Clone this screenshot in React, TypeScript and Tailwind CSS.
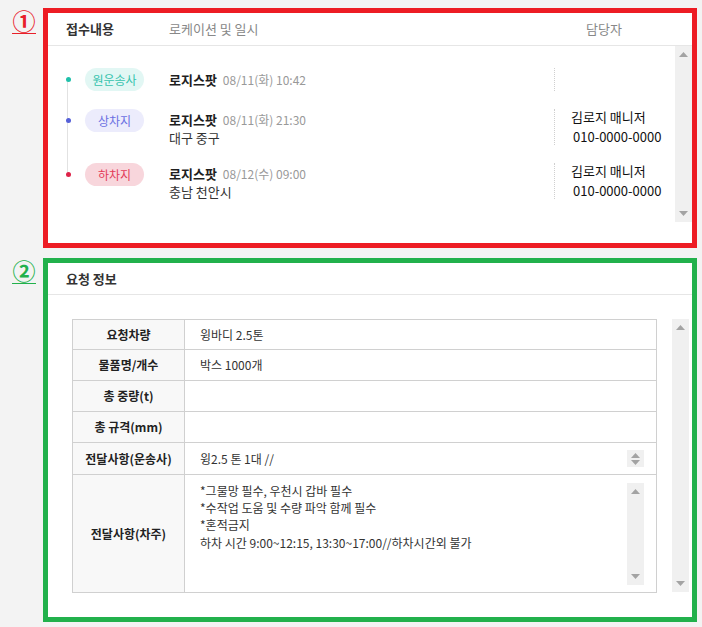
import React from 'react'

const FONT = 'font-["Noto_Sans_CJK_KR","Noto_Sans",sans-serif]'

type Stop = {
  badge: string
  badgeClass: string
  dotClass: string
  date: string
  addr?: string
  manager?: boolean
}

const STOPS: Stop[] = [
  { badge: '원운송사', badgeClass: 'bg-[#e2f7f4] text-[#35c3ad]', dotClass: 'bg-[#1fc0aa]', date: '08/11(화) 10:42' },
  { badge: '상차지', badgeClass: 'bg-[#ececfc] text-[#6b70e2]', dotClass: 'bg-[#5560d8]', date: '08/11(화) 21:30', addr: '대구 중구', manager: true },
  { badge: '하차지', badgeClass: 'bg-[#f8d6dc] text-[#e33a58]', dotClass: 'bg-[#de2248]', date: '08/12(수) 09:00', addr: '충남 천안시', manager: true },
]

function Arrow({ up }: { up?: boolean }) {
  return (
    <svg width="9" height="5" viewBox="0 0 9 5" aria-hidden>
      <polygon points={up ? '4.5,0 9,5 0,5' : '0,0 9,0 4.5,5'} fill="#a3a3a3" />
    </svg>
  )
}

function ScrollBar({ className }: { className: string }) {
  return (
    <div className={`flex flex-col items-center justify-between bg-[#f0f0f0] py-[6px] ${className}`}>
      <Arrow up />
      <Arrow />
    </div>
  )
}

function Marker({ n, color }: { n: string; color: string }) {
  return (
    <div className="w-[43px] shrink-0 pl-[12px]">
      <span className={`block w-[24px] text-center text-[23px] leading-[25px] font-bold border-b-[1.5px] ${color}`}>{n}</span>
    </div>
  )
}

function StopRow({ s }: { s: Stop }) {
  const tall = !!s.addr
  return (
    <div className={`flex items-start ${tall ? 'h-[36px]' : 'h-[23px]'}`}>
      <div className="w-[37px] h-[23px] shrink-0 flex items-center pl-[18px]">
        <span className={`relative z-10 size-[5px] rounded-full ${s.dotClass}`} />
      </div>
      <span className={`w-[59px] h-[23px] shrink-0 rounded-full flex items-center justify-center text-[12px] ${s.badgeClass}`}>{s.badge}</span>
      <div className="ml-[25px] flex-1">
        <div className={`flex items-center gap-[6px] ${tall ? 'h-[22px]' : 'h-[23px]'}`}>
          <span className="text-[13px] font-bold text-[#1f1f1f]">로지스팟</span>
          <span className="text-[12px] text-[#999]">{s.date}</span>
        </div>
        {s.addr && <div className="text-[13px] leading-[13px] text-[#333]">{s.addr}</div>}
      </div>
      <div className={`w-[121px] shrink-0 border-l border-dotted border-[#cfcfcf] flex items-center ${tall ? 'h-[36px]' : 'h-[23px]'}`}>
        {s.manager && (
          <div className="pl-[16px] text-[13px] leading-[20px] text-[#111]">
            <div>김로지 매니저</div>
            <div className="pl-[2px]">010-0000-0000</div>
          </div>
        )}
      </div>
    </div>
  )
}

const ROWS: { label: string; value?: string; h: string; kind?: 'line' | 'area' }[] = [
  { label: '요청차량', value: '윙바디 2.5톤', h: 'h-[30px]' },
  { label: '물품명/개수', value: '박스 1000개', h: 'h-[31px]' },
  { label: '총 중량(t)', h: 'h-[31px]' },
  { label: '총 규격(mm)', h: 'h-[31px]' },
  { label: '전달사항(운송사)', value: '윙2.5 톤 1대 //', h: 'h-[32px]', kind: 'line' },
  { label: '전달사항(차주)', h: 'h-[118px]', kind: 'area' },
]

const NOTES = ['*그물망 필수, 우천시 갑바 필수', '*수작업 도움 및 수량 파악 함께 필수', '*혼적금지', '하차 시간 9:00~12:15, 13:30~17:00//하차시간외 불가']

export default function App() {
  return (
    <div className={`w-[702px] h-[627px] bg-[#f3f3f3] pt-[8px] ${FONT}`}>
      {/* 1 */}
      <div className="flex">
        <Marker n="①" color="text-[#e8202a] border-[#e8202a]" />
        <div className="w-[654px] h-[240px] border-[5px] border-[#ed1c24] bg-white flex flex-col">
          <div className="h-[33px] shrink-0 border-b border-[#e6e6e6] flex items-center text-[13px]">
            <span className="ml-[18px] w-[103px] font-semibold text-[#333]">접수내용</span>
            <span className="text-[#888]">로케이션 및 일시</span>
            <span className="ml-auto mr-[70px] text-[#888]">담당자</span>
          </div>
          <div className="flex">
            <div className="relative flex-1 pt-[22px] flex flex-col gap-[18px]">
              <div className="absolute left-[19px] top-[34px] h-[96px] w-px bg-[#e2e2e2]" />
              {STOPS.map((s, i) => (
                <StopRow key={i} s={s} />
              ))}
            </div>
            <ScrollBar className="w-[17px] h-[176px]" />
          </div>
        </div>
      </div>

      {/* 2 */}
      <div className="flex mt-[10px]">
        <Marker n="②" color="text-[#22b14c] border-[#22b14c]" />
        <div className="w-[654px] h-[364px] border-[5px] border-[#22b14c] bg-white flex flex-col">
          <div className="h-[32px] shrink-0 border-b border-[#e6e6e6] flex items-center">
            <span className="ml-[18px] text-[13px] font-semibold text-[#333]">요청 정보</span>
          </div>
          <div className="flex pl-[24px] pt-[24px]">
            <table className="w-[585px] border-collapse border border-[#d0d0d0] text-[12px] table-fixed">
              <tbody>
                {ROWS.map((r) => (
                  <tr key={r.label} className={r.h}>
                    <td className="w-[112px] border border-[#d0d0d0] bg-[#f8f8f8] text-center font-bold text-[#222]">{r.label}</td>
                    <td className="border border-[#d0d0d0] text-[#333] p-0">
                      {r.kind === 'line' && (
                        <div className="flex items-center pl-[15px] pr-[12px]">
                          <span className="flex-1">{r.value}</span>
                          <div className="w-[17px] h-[17px] bg-[#f0f0f0] flex flex-col items-center justify-center gap-[2px]">
                            <Arrow up />
                            <Arrow />
                          </div>
                        </div>
                      )}
                      {r.kind === 'area' && (
                        <div className="flex pl-[15px] pr-[12px] h-[102px]">
                          <div className="flex-1 leading-[17.4px] -mt-[1px]">
                            {NOTES.map((n) => (
                              <div key={n}>{n}</div>
                            ))}
                          </div>
                          <ScrollBar className="w-[17px] h-[102px]" />
                        </div>
                      )}
                      {!r.kind && <span className="pl-[15px]">{r.value}</span>}
                    </td>
                  </tr>
                ))}
              </tbody>
            </table>
            <ScrollBar className="ml-[15px] w-[17px] h-[273px]" />
          </div>
        </div>
      </div>
    </div>
  )
}
